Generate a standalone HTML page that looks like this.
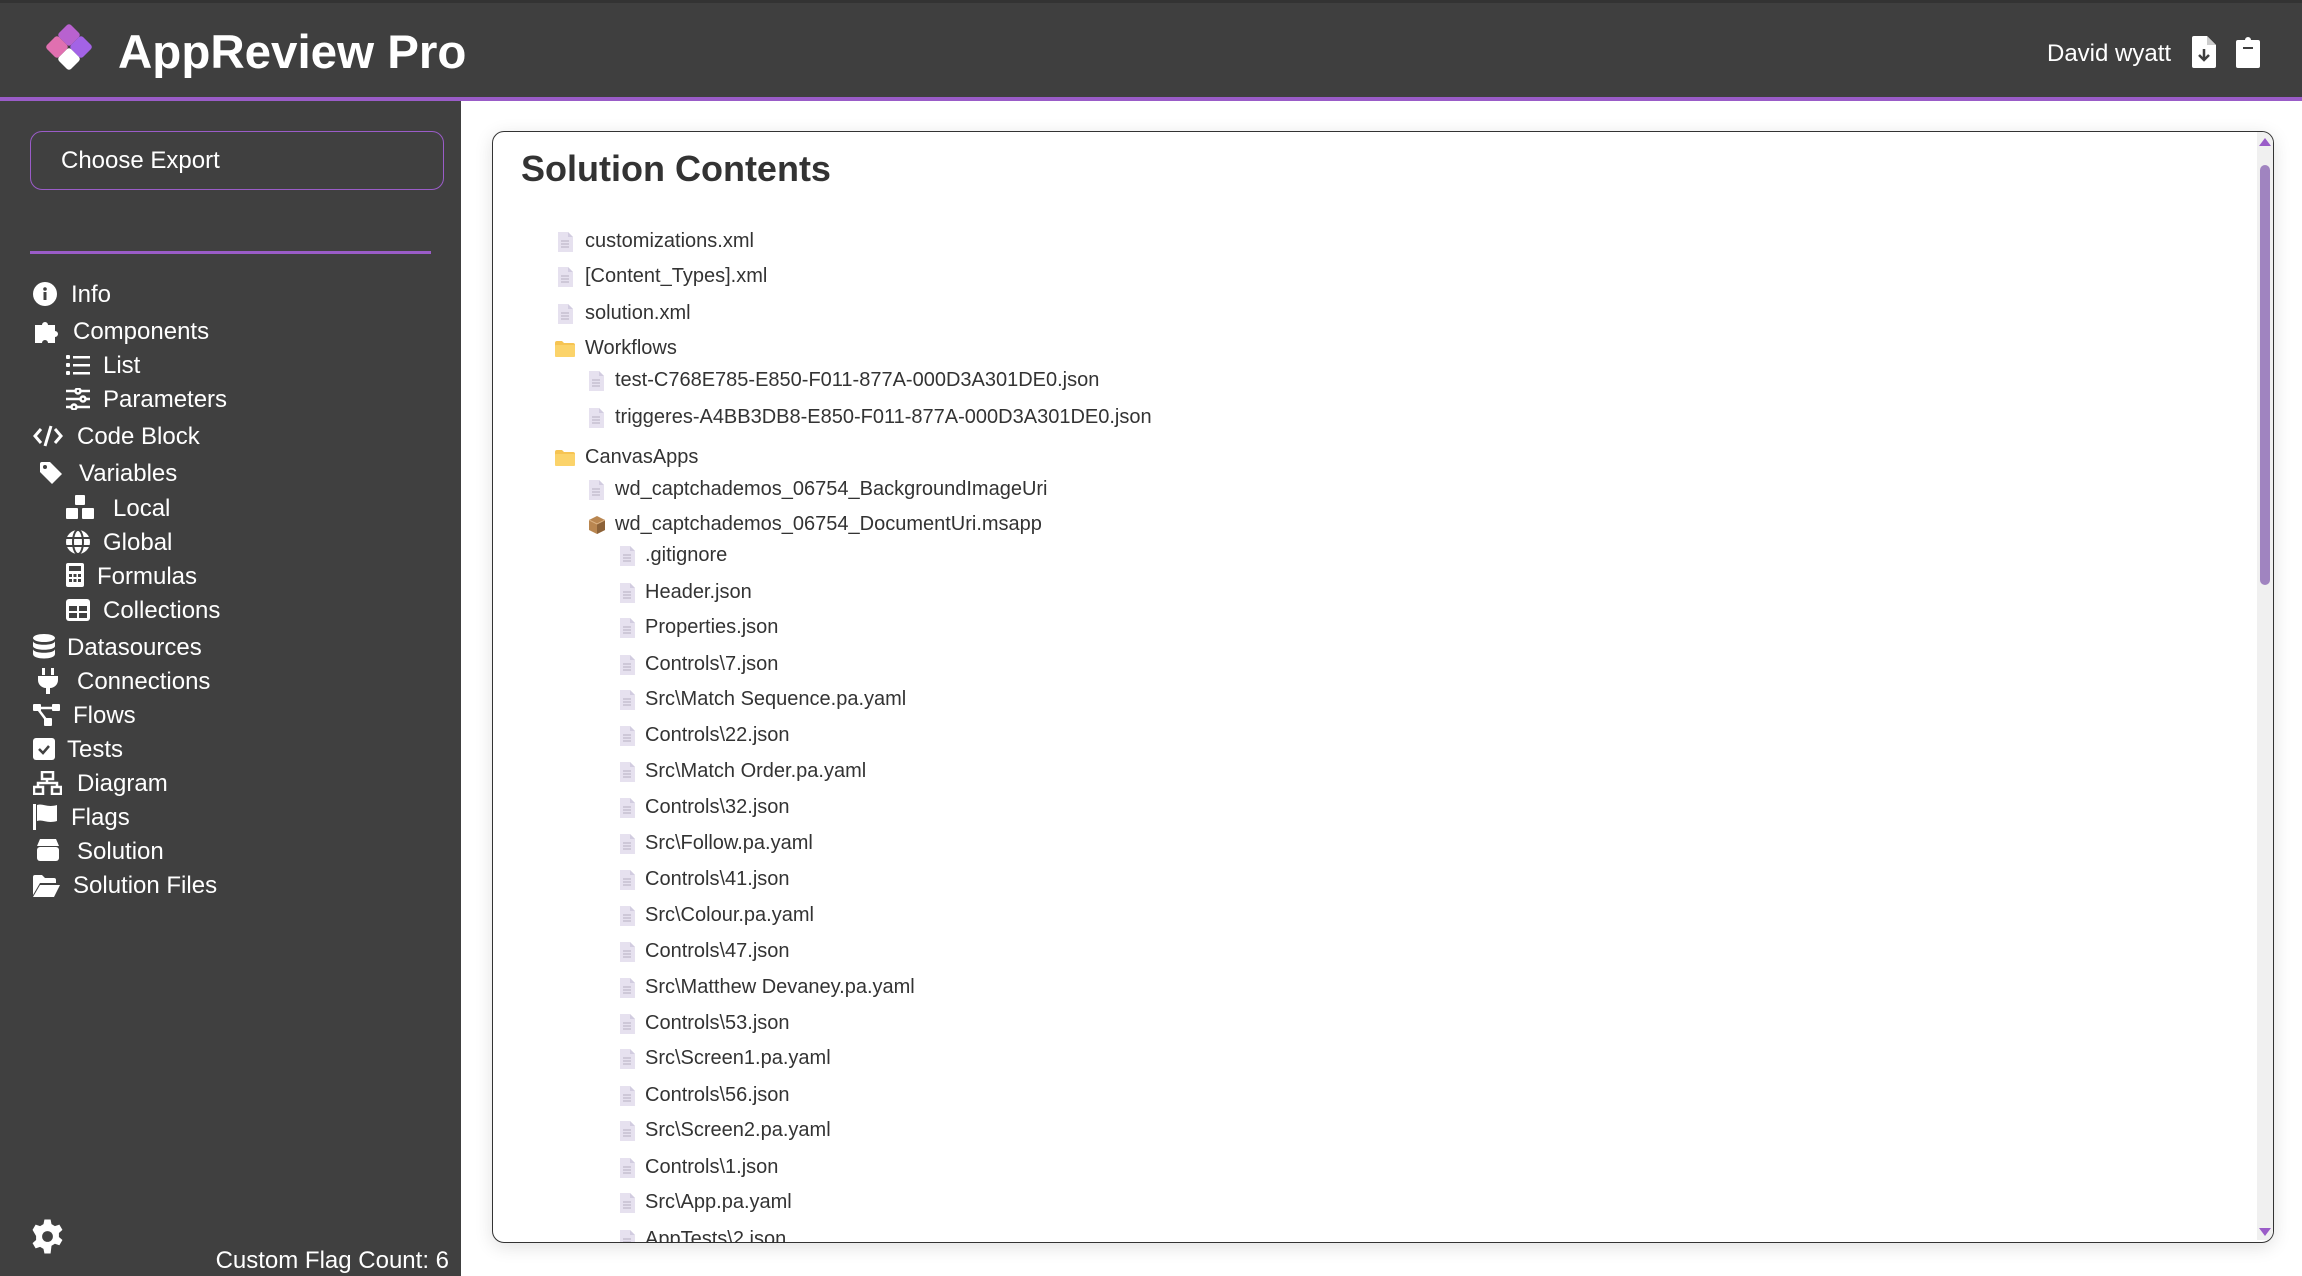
<!DOCTYPE html>
<html><head><meta charset="utf-8"><style>
*{margin:0;padding:0;box-sizing:border-box}
body{width:2302px;height:1276px;overflow:hidden;background:#fff;font-family:"Liberation Sans",Arial,sans-serif;position:relative}
#hdr{position:absolute;left:0;top:0;width:2302px;height:101px;background:#3f3f3f;border-top:3px solid #333;border-bottom:4px solid #9a5cc8}
#side{position:absolute;left:0;top:101px;width:461px;height:1175px;background:#404040}
.a{position:absolute;white-space:nowrap}
.nv{color:#fff;font-size:24px;line-height:28px}
.ic{position:absolute}
#panel{position:absolute;left:492px;top:131px;width:1782px;height:1112px;border:1.5px solid #333;border-radius:12px;overflow:hidden;box-shadow:0 4px 18px rgba(0,0,0,.12);background:#fff}
.t{position:absolute;font-size:20px;color:#333;line-height:24px;white-space:nowrap}
.fi{position:absolute;width:15px;height:20px}
</style></head><body>
<div id="hdr">
<svg class="ic" style="left:44px;top:19px" width="50" height="50" viewBox="0 0 50 50">
<g transform="rotate(45 25 25)">
<rect x="8" y="8" width="17" height="17" rx="3" fill="#b862cf"/>
<rect x="25" y="8" width="17" height="17" fill="#a363e6" rx="3"/>
<rect x="25" y="25" width="17" height="17" fill="#ffffff" rx="3"/>
<rect x="8" y="25" width="17" height="17" fill="#e070b0" rx="3"/>
</g></svg>
<div class="a" style="left:118px;top:20px;font-size:47.5px;font-weight:bold;color:#fff;line-height:60px">AppReview Pro</div>
<div class="a" style="left:2047px;top:36px;font-size:24px;color:#fff;line-height:30px">David wyatt</div>
<svg class="ic" style="left:2192px;top:33px" width="24" height="32" viewBox="0 0 24 32"><path d="M2 0h13l9 9v21a2 2 0 0 1-2 2H2a2 2 0 0 1-2-2V2a2 2 0 0 1 2-2z" fill="#fff"/><path d="M15 0v9h9" fill="#ccc"/><path d="M12 13v11M7 19l5 5 5-5" stroke="#3f3f3f" stroke-width="2.5" fill="none"/></svg>
<svg class="ic" style="left:2236px;top:33px" width="24" height="32" viewBox="0 0 24 32"><path d="M9 4a3 3 0 0 1 6 0h7a2 2 0 0 1 2 2v24a2 2 0 0 1-2 2H2a2 2 0 0 1-2-2V6a2 2 0 0 1 2-2z" fill="#fff"/><rect x="7" y="11" width="10" height="2" fill="#3f3f3f"/></svg>
</div>
<div id="side">
<div class="a" style="left:30px;top:30px;width:414px;height:59px;border:1.5px solid #9a5cc8;border-radius:12px"></div>
<div class="a nv" style="left:61px;top:46px">Choose Export</div>
<div class="a" style="left:30px;top:150px;width:401px;height:3px;background:#9a5cc8"></div>
</div>
<div style="position:absolute;left:0;top:0">
<svg class="ic" style="left:33px;top:282px" width="24" height="24" viewBox="0 0 24 24"><circle cx="12" cy="12" r="12" fill="#fff"/><rect x="10.5" y="10" width="3" height="8" fill="#404040"/><circle cx="12" cy="7" r="1.8" fill="#404040"/></svg>
<div class="a nv" style="left:71px;top:281px">Info</div>
<svg class="ic" style="left:35px;top:319px" width="26" height="24" viewBox="0 0 26 24"><path d="M0 6h7a3 3 0 1 1 6 0h7v6a3 3 0 1 1 0 6v6h-7a3 3 0 1 0-6 0H0z" fill="#fff"/></svg>
<div class="a nv" style="left:73px;top:318px">Components</div>
<svg class="ic" style="left:66px;top:354px" width="24" height="22" viewBox="0 0 24 22"><g fill="#fff"><rect x="0" y="1" width="4" height="4" rx="1"/><rect x="0" y="9" width="4" height="4" rx="1"/><rect x="0" y="17" width="4" height="4" rx="1"/><rect x="7" y="2" width="17" height="2.5"/><rect x="7" y="10" width="17" height="2.5"/><rect x="7" y="18" width="17" height="2.5"/></g></svg>
<div class="a nv" style="left:103px;top:352px">List</div>
<svg class="ic" style="left:66px;top:388px" width="24" height="22" viewBox="0 0 24 22" fill="none" stroke="#fff" stroke-width="2.5"><path d="M0 3h24M0 11h24M0 19h24"/><circle cx="12" cy="3" r="2.5" fill="#404040"/><circle cx="17" cy="11" r="2.5" fill="#404040"/><circle cx="8" cy="19" r="2.5" fill="#404040"/></svg>
<div class="a nv" style="left:103px;top:386px">Parameters</div>
<svg class="ic" style="left:33px;top:425px" width="30" height="22" viewBox="0 0 30 22" fill="none" stroke="#fff" stroke-width="3"><path d="M8 4L2 11l6 7M22 4l6 7-6 7M18 1l-6 20"/></svg>
<div class="a nv" style="left:77px;top:423px">Code Block</div>
<svg class="ic" style="left:40px;top:462px" width="22" height="22" viewBox="0 0 22 22"><path d="M0 2a2 2 0 0 1 2-2h8l12 12-10 10L0 10z" fill="#fff"/><circle cx="5" cy="5" r="2" fill="#404040"/></svg>
<div class="a nv" style="left:79px;top:460px">Variables</div>
<svg class="ic" style="left:66px;top:495px" width="28" height="24" viewBox="0 0 28 24" fill="#fff"><rect x="9" y="0" width="10" height="10" rx="1"/><rect x="0" y="13" width="12" height="11" rx="1"/><rect x="16" y="13" width="12" height="11" rx="1"/></svg>
<div class="a nv" style="left:113px;top:495px">Local</div>
<svg class="ic" style="left:66px;top:530px" width="24" height="24" viewBox="0 0 24 24"><circle cx="12" cy="12" r="12" fill="#fff"/><g stroke="#404040" stroke-width="2" fill="none"><ellipse cx="12" cy="12" rx="5" ry="12"/><path d="M0 8h24M0 16h24"/></g></svg>
<div class="a nv" style="left:103px;top:529px">Global</div>
<svg class="ic" style="left:66px;top:563px" width="18" height="24" viewBox="0 0 18 24"><rect width="18" height="24" rx="2" fill="#fff"/><rect x="3" y="3" width="12" height="5" fill="#404040"/><g fill="#404040"><rect x="3" y="11" width="3" height="3"/><rect x="7.5" y="11" width="3" height="3"/><rect x="12" y="11" width="3" height="3"/><rect x="3" y="16" width="3" height="3"/><rect x="7.5" y="16" width="3" height="3"/><rect x="12" y="16" width="3" height="3"/></g></svg>
<div class="a nv" style="left:97px;top:563px">Formulas</div>
<svg class="ic" style="left:66px;top:599px" width="24" height="22" viewBox="0 0 24 22"><rect width="24" height="22" rx="3" fill="#fff"/><g fill="#404040"><rect x="3" y="7" width="8" height="5"/><rect x="13" y="7" width="8" height="5"/><rect x="3" y="14" width="8" height="5"/><rect x="13" y="14" width="8" height="5"/></g></svg>
<div class="a nv" style="left:103px;top:597px">Collections</div>
<svg class="ic" style="left:33px;top:634px" width="22" height="25" viewBox="0 0 22 25" fill="#fff"><ellipse cx="11" cy="4" rx="11" ry="4"/><path d="M0 7c0 5 22 5 22 0v5c0 5-22 5-22 0zM0 15c0 5 22 5 22 0v5c0 6-22 6-22 0z"/></svg>
<div class="a nv" style="left:67px;top:634px">Datasources</div>
<svg class="ic" style="left:38px;top:668px" width="20" height="26" viewBox="0 0 20 26" fill="#fff"><rect x="4" y="0" width="3" height="7"/><rect x="13" y="0" width="3" height="7"/><path d="M0 8h20v4a8 8 0 0 1-8 8v6H8v-6a8 8 0 0 1-8-8z"/></svg>
<div class="a nv" style="left:77px;top:668px">Connections</div>
<svg class="ic" style="left:33px;top:704px" width="27" height="22" viewBox="0 0 27 22"><g fill="#fff"><rect x="0" y="0" width="8" height="7" rx="1"/><rect x="19" y="0" width="8" height="7" rx="1"/><rect x="11" y="14" width="8" height="8" rx="1"/></g><path d="M6 4h15M5 5l9 12" stroke="#fff" stroke-width="2.5"/></svg>
<div class="a nv" style="left:73px;top:702px">Flows</div>
<svg class="ic" style="left:33px;top:738px" width="22" height="22" viewBox="0 0 22 22"><rect width="22" height="22" rx="3" fill="#fff"/><path d="M6 11l4 4 6-7" stroke="#404040" stroke-width="2.5" fill="none"/></svg>
<div class="a nv" style="left:67px;top:736px">Tests</div>
<svg class="ic" style="left:33px;top:771px" width="29" height="24" viewBox="0 0 29 24" fill="none" stroke="#fff" stroke-width="2.5"><rect x="9" y="1" width="11" height="7"/><rect x="1" y="16" width="9" height="7"/><rect x="19" y="16" width="9" height="7"/><path d="M14 8v4M5 16v-4h19v4"/></svg>
<div class="a nv" style="left:77px;top:770px">Diagram</div>
<svg class="ic" style="left:33px;top:804px" width="24" height="26" viewBox="0 0 24 26" fill="#fff"><rect x="0" y="0" width="3" height="26"/><path d="M4 1c6-2 10 3 20 0v16c-10 3-14-2-20 0z"/></svg>
<div class="a nv" style="left:71px;top:804px">Flags</div>
<svg class="ic" style="left:37px;top:839px" width="22" height="22" viewBox="0 0 22 22" fill="#fff"><path d="M3 0h16l3 7H0z"/><rect x="0" y="8" width="22" height="14" rx="3"/></svg>
<div class="a nv" style="left:77px;top:838px">Solution</div>
<svg class="ic" style="left:33px;top:875px" width="27" height="22" viewBox="0 0 27 22" fill="#fff"><path d="M0 2a2 2 0 0 1 2-2h7l3 3h9a2 2 0 0 1 2 2v3H7L0 20z"/><path d="M7 10h20l-6 12H0z"/></svg>
<div class="a nv" style="left:73px;top:872px">Solution Files</div>
<svg class="ic" style="left:29px;top:1218px" width="37" height="37" viewBox="0 0 24 24"><path fill="#fff" d="M10 1h4l.6 3 2.2 1.3 2.9-1 2 3.4-2.3 2v2.6l2.3 2-2 3.4-2.9-1-2.2 1.3L14 23h-4l-.6-3-2.2-1.3-2.9 1-2-3.4 2.3-2v-2.6L2.3 7.7l2-3.4 2.9 1L9.4 4z"/><circle cx="12" cy="12" r="3.5" fill="#404040"/></svg>
<div class="a nv" style="left:0;width:449px;text-align:right;top:1247px">Custom Flag Count: 6</div>
</div>

<div id="panel">
<div class="a" style="left:28px;top:14px;font-size:36px;font-weight:bold;color:#333;line-height:46px">Solution Contents</div>
<div style="position:absolute;right:0;top:0;width:16px;height:1108px;background:#f0f0f0">
<svg style="position:absolute;left:2px;top:6px" width="12" height="8"><path d="M0 8L6 0l6 8z" fill="#9a5cc8"/></svg>
<div style="position:absolute;left:3px;top:33px;width:10px;height:420px;border-radius:5px;background:#a084c0"></div>
<svg style="position:absolute;left:2px;top:1096px" width="12" height="8"><path d="M0 0h12L6 8z" fill="#9a5cc8"/></svg>
</div>
<div id="tree"></div>
</div>
<script>
var rows=[[0,"customizations.xml",241,"f"],[0,"[Content_Types].xml",276,"f"],[0,"solution.xml",313,"f"],[0,"Workflows",348,"d"],[1,"test-C768E785-E850-F011-877A-000D3A301DE0.json",380,"f"],[1,"triggeres-A4BB3DB8-E850-F011-877A-000D3A301DE0.json",417,"f"],[0,"CanvasApps",457,"d"],[1,"wd_captchademos_06754_BackgroundImageUri",489,"f"],[1,"wd_captchademos_06754_DocumentUri.msapp",524,"b"],[2,".gitignore",555,"f"],[2,"Header.json",592,"f"],[2,"Properties.json",627,"f"],[2,"Controls\\7.json",664,"f"],[2,"Src\\Match Sequence.pa.yaml",699,"f"],[2,"Controls\\22.json",735,"f"],[2,"Src\\Match Order.pa.yaml",771,"f"],[2,"Controls\\32.json",807,"f"],[2,"Src\\Follow.pa.yaml",843,"f"],[2,"Controls\\41.json",879,"f"],[2,"Src\\Colour.pa.yaml",915,"f"],[2,"Controls\\47.json",951,"f"],[2,"Src\\Matthew Devaney.pa.yaml",987,"f"],[2,"Controls\\53.json",1023,"f"],[2,"Src\\Screen1.pa.yaml",1058,"f"],[2,"Controls\\56.json",1095,"f"],[2,"Src\\Screen2.pa.yaml",1130,"f"],[2,"Controls\\1.json",1167,"f"],[2,"Src\\App.pa.yaml",1202,"f"],[2,"AppTests\\2.json",1239,"f"]];
var ix=[557,588,619],tx=[584,614,644],h="";
var F='<svg class="fi" viewBox="0 0 15 20" style="left:%Xpx;top:%Ypx"><path d="M0 0h10l5 5v15H0z" fill="#e6e1ef"/><path d="M10 0v5h5" fill="#d2cce0"/><path d="M3 9h8M3 12h8M3 15h8" stroke="#b5b0c2" stroke-width="1"/></svg>';
var D='<svg class="fi" viewBox="0 0 20 16" style="width:20px;height:16px;left:%Xpx;top:%Ypx"><path d="M0 2a2 2 0 0 1 2-2h5l2 2h9a2 2 0 0 1 2 2v10a2 2 0 0 1-2 2H2a2 2 0 0 1-2-2z" fill="#f6c453"/><rect x="0" y="4" width="20" height="12" rx="1" fill="#fbd36a"/></svg>';
var B='<svg class="fi" viewBox="0 0 16 18" style="width:16px;height:18px;left:%Xpx;top:%Ypx"><path d="M8 0l8 4v10l-8 4-8-4V4z" fill="#b98650"/><path d="M8 8l8-4v10l-8 4z" fill="#8c6238"/><path d="M0 4l8 4 8-4" stroke="#dcb384" fill="none"/></svg>';
rows.forEach(function(r){var l=r[0],y=r[2]-131;var x=ix[l]-492;var s=r[3]=="f"?F:r[3]=="d"?D:B;var dy=r[3]=="f"?10:r[3]=="d"?8:9;
h+=s.replace("%X",x-(r[3]=="d"?3:0)).replace("%Y",y-dy);
h+='<div class="t" style="left:'+(tx[l]-492)+'px;top:'+(y-13)+'px">'+r[1].replace(/&/g,"&amp;")+'</div>';});
document.getElementById("tree").innerHTML=h;
</script>
</body></html>
